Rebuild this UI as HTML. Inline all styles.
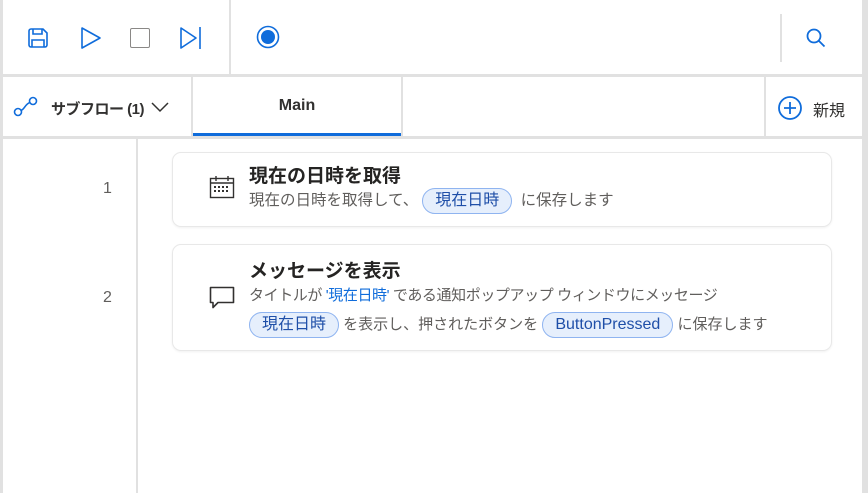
<!DOCTYPE html>
<html><head><meta charset="utf-8"><style>
*{margin:0;padding:0;box-sizing:border-box}
body{width:868px;height:493px;background:#fff;position:relative;overflow:hidden;font-family:"Liberation Sans","Noto Sans CJK JP",sans-serif;color:#323130}
.a{position:absolute}
.pill{display:inline-block;border:1px solid #8fb4f0;background:#e6effc;color:#1f4fa8;border-radius:13px;padding:0 12px;height:26px;line-height:24px;font-size:16px;vertical-align:middle}
.t{font-size:15px;color:#605e5c;white-space:nowrap}
.card{position:absolute;left:172px;width:660px;border:1px solid #e8e8e8;border-radius:9px;box-shadow:0 1px 2px rgba(0,0,0,.06)}
.h{font-size:19px;font-weight:bold;color:#252423}
</style></head><body>
<div class="a" style="left:0;top:0;width:3px;height:493px;background:#e1e1e1"></div>
<div class="a" style="left:862px;top:0;width:6px;height:493px;background:#e1e1e1"></div>
<div class="a" style="left:229px;top:0;width:2px;height:75px;background:#e1e1e1"></div>
<div class="a" style="left:780px;top:14px;width:2px;height:48px;background:#e1e1e1"></div>
<div class="a" style="left:0;top:74px;width:868px;height:3px;background:#e1e1e1"></div>
<div class="a" style="left:191px;top:77px;width:2px;height:60px;background:#e1e1e1"></div>
<div class="a" style="left:401px;top:77px;width:2px;height:60px;background:#e1e1e1"></div>
<div class="a" style="left:764px;top:77px;width:2px;height:60px;background:#e1e1e1"></div>
<div class="a" style="left:193px;top:133px;width:208px;height:3px;background:#0f6cdb"></div>
<div class="a" style="left:0;top:136px;width:868px;height:3px;background:#e1e1e1"></div>
<div class="a" style="left:136px;top:139px;width:2px;height:354px;background:#e1e1e1"></div>

<svg class="a" style="left:26px;top:26px" width="24" height="24" viewBox="0 0 24 24" fill="none" stroke="#0f6cdb" stroke-width="1.6"><path d="M3 5a2 2 0 0 1 2-2h12l4 4v12a2 2 0 0 1-2 2H5a2 2 0 0 1-2-2z"/><path d="M7 3v5h9V3M6 21v-7h12v7"/></svg>
<svg class="a" style="left:80px;top:26px" width="22" height="24" viewBox="0 0 22 24" fill="none" stroke="#0f6cdb" stroke-width="1.6"><path d="M2 2l18 10L2 22z" stroke-linejoin="round"/></svg>
<div class="a" style="left:130px;top:28px;width:20px;height:20px;border:1.6px solid #8a8886;border-radius:2px"></div>
<svg class="a" style="left:179px;top:26px" width="24" height="24" viewBox="0 0 24 24" fill="none" stroke="#0f6cdb" stroke-width="1.6"><path d="M2 2l15 10L2 22z" stroke-linejoin="round"/><path d="M21 1v22"/></svg>
<svg class="a" style="left:256px;top:25px" width="24" height="24" viewBox="0 0 24 24"><circle cx="12" cy="12" r="10.5" fill="none" stroke="#0f6cdb" stroke-width="1.6"/><circle cx="12" cy="12" r="7" fill="#0f6cdb"/></svg>
<svg class="a" style="left:805px;top:27px" width="22" height="22" viewBox="0 0 22 22" fill="none" stroke="#0f6cdb" stroke-width="1.8"><circle cx="9" cy="9" r="6.5"/><path d="M13.5 13.5l6 6"/></svg>

<svg class="a" style="left:13px;top:96px" width="26" height="22" viewBox="0 0 26 22" fill="none" stroke="#0f6cdb" stroke-width="1.6"><circle cx="5" cy="16" r="3.5"/><circle cx="20" cy="5" r="3.5"/><path d="M8 14.5C12 13 12 8 17 6.5"/></svg>
<div class="a" style="left:51px;top:98px;font-size:15px;font-weight:bold;color:#323130;letter-spacing:-0.5px">サブフロー (1)</div>
<svg class="a" style="left:150px;top:100px" width="20" height="14" viewBox="0 0 20 14" fill="none" stroke="#323130" stroke-width="1.5"><path d="M2 3l8 8 8-8"/></svg>
<div class="a" style="left:193px;top:97px;width:208px;text-align:center;font-size:16px;font-weight:bold;color:#323130">Main</div>
<svg class="a" style="left:777px;top:95px" width="26" height="26" viewBox="0 0 26 26" fill="none" stroke="#0f6cdb" stroke-width="1.8"><circle cx="13" cy="13" r="11"/><path d="M13 7v12M7 13h12"/></svg>
<div class="a" style="left:813px;top:97px;font-size:16px;color:#323130">新規</div>

<div class="a" style="left:103px;top:180px;font-size:16px;color:#605e5c">1</div>
<div class="a" style="left:103px;top:289px;font-size:16px;color:#605e5c">2</div>

<div class="card" style="top:152px;height:75px"></div>
<svg class="a" style="left:209px;top:175px" width="26" height="24" viewBox="0 0 26 24" fill="none" stroke="#323130" stroke-width="1.4"><rect x="1.5" y="3.5" width="23" height="19"/><path d="M1.5 8h23M7 1v5M19 1v5"/><g fill="#323130" stroke="none"><rect x="5" y="11" width="2" height="2"/><rect x="9" y="11" width="2" height="2"/><rect x="13" y="11" width="2" height="2"/><rect x="17" y="11" width="2" height="2"/><rect x="5" y="15" width="2" height="2"/><rect x="9" y="15" width="2" height="2"/><rect x="13" y="15" width="2" height="2"/><rect x="17" y="15" width="2" height="2"/></g></svg>
<div class="a h" style="left:249px;top:161px">現在の日時を取得</div>
<div class="a t" style="left:249px;top:188px;font-size:15.5px">現在の日時を取得して、<span class="pill" style="margin:0 4px">現在日時</span> に保存します</div>

<div class="card" style="top:244px;height:107px"></div>
<svg class="a" style="left:209px;top:286px" width="26" height="24" viewBox="0 0 26 24" fill="none" stroke="#323130" stroke-width="1.6"><path d="M1.5 1.5h23v15H9l-5 5v-5H1.5z" stroke-linejoin="round"/></svg>
<div class="a h" style="left:249px;top:256px">メッセージを表示</div>
<div class="a t" style="left:249px;top:284px;letter-spacing:-0.4px">タイトルが <span style="color:#0f6cdb">'現在日時'</span> である通知ポップアップ ウィンドウにメッセージ</div>
<div class="a t" style="left:249px;top:312px"><span class="pill">現在日時</span> を表示し、押されたボタンを <span class="pill">ButtonPressed</span> に保存します</div>
</body></html>
